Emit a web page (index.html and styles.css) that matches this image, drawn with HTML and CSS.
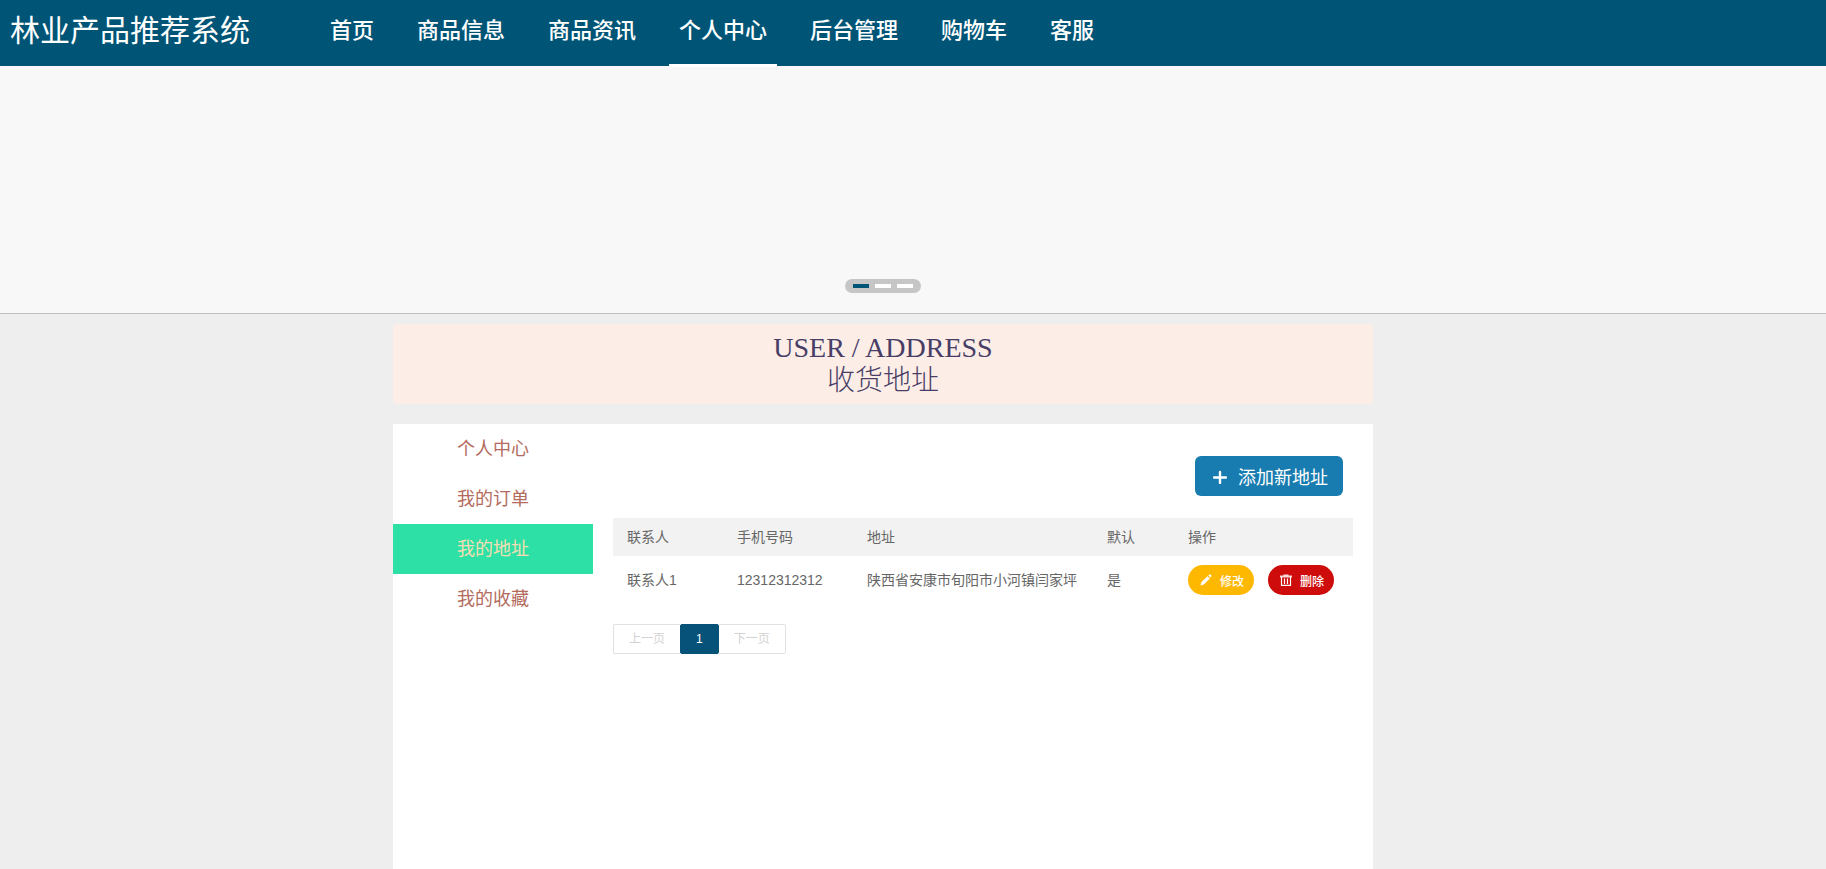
FILE: index.html
```html
<!DOCTYPE html>
<html lang="zh-CN">
<head>
<meta charset="utf-8">
<title>林业产品推荐系统</title>
<link rel="stylesheet" href="styles.css">
</head>
<body>
<header class="topbar">
  <a class="brand" href="#">林业产品推荐系统</a>
  <nav class="nav">
    <a class="nav-link" href="#">首页</a>
    <a class="nav-link" href="#">商品信息</a>
    <a class="nav-link" href="#">商品资讯</a>
    <a class="nav-link nav-link-active" href="#">个人中心</a>
    <a class="nav-link" href="#">后台管理</a>
    <a class="nav-link" href="#">购物车</a>
    <a class="nav-link" href="#">客服</a>
  </nav>
</header>
<section class="carousel">
  <div class="dots">
    <button class="dot dot-active" type="button" aria-label="1"></button>
    <button class="dot" type="button" aria-label="2"></button>
    <button class="dot" type="button" aria-label="3"></button>
  </div>
</section>
<main class="page">
  <h1 class="title"><span>USER / ADDRESS</span><span>收货地址</span></h1>
  <div class="panel">
    <nav class="side">
      <a class="side-link" href="#">个人中心</a>
      <a class="side-link" href="#">我的订单</a>
      <a class="side-link side-link-active" href="#">我的地址</a>
      <a class="side-link" href="#">我的收藏</a>
    </nav>
    <section class="content">
      <button class="add" type="button">
        <svg class="add-icon" viewBox="0 0 14 16" aria-hidden="true"><path d="M7 4v11M1 9.500h12" fill="none" stroke="currentColor" stroke-width="2.400" stroke-linecap="round"/></svg>
        添加新地址
      </button>
      <table class="table">
        <colgroup><col class="col-name"><col class="col-phone"><col class="col-address"><col class="col-default"><col class="col-actions"></colgroup>
        <thead><tr><th>联系人</th><th>手机号码</th><th>地址</th><th>默认</th><th>操作</th></tr></thead>
        <tbody>
          <tr>
            <td>联系人1</td><td>12312312312</td><td>陕西省安康市旬阳市小河镇闫家坪</td><td>是</td>
            <td>
              <div class="actions">
                <button class="pill pill-edit" type="button">
                  <svg class="pill-icon" viewBox="0 0 12 12" aria-hidden="true"><path d="M.5 11.500l1-3.500 6-5.800 2.300 2.300-6 5.900zM8.300 1.500l1-.9q.6-.4 1.200 0l.7.7q.4.600 0 1.200l-.8 1z" fill="currentColor"/></svg>
                  修改
                </button>
                <button class="pill pill-delete" type="button">
                  <svg class="pill-icon" viewBox="0 0 12 12" aria-hidden="true"><path d="M0 1.500h3.500V.5h5v1H12v2H0z" fill="currentColor" opacity=".85"/><path d="M1.500 3v8.300h9V3M4.500 4.500v5.500M7.500 4.500v5.500" fill="none" stroke="currentColor" stroke-width="1.200"/></svg>
                  删除
                </button>
              </div>
            </td>
          </tr>
        </tbody>
      </table>
      <div class="pager">
        <button class="page-btn page-prev" type="button" disabled>上一页</button>
        <button class="page-btn page-current" type="button">1</button>
        <button class="page-btn page-next" type="button" disabled>下一页</button>
      </div>
    </section>
  </div>
</main>
</body>
</html>
```
FILE: styles.css
```css
* { box-sizing: border-box; }
html, body { height: 100%; }
body {
  margin: 0;
  display: flex;
  flex-direction: column;
  background: #eee;
  color: #666;
  font: 14px/20px "Liberation Sans", "Noto Sans CJK SC", sans-serif;
}
a { text-decoration: none; color: inherit; }
button { font-family: inherit; border: 0; padding: 0; cursor: pointer; white-space: nowrap; }

.topbar {
  flex: none;
  display: flex;
  height: 66px;
  padding-left: 10px;
  background: #005577;
  color: #fff;
}
.brand { font-size: 30px; line-height: 62px; white-space: nowrap; }
.nav { display: flex; gap: 23px; margin-left: 70px; }
.nav-link {
  position: relative;
  padding: 0 10px;
  font-size: 22px;
  font-weight: 500;
  line-height: 62px;
  white-space: nowrap;
}
.nav-link-active::after {
  content: "";
  position: absolute;
  left: 0;
  right: 0;
  bottom: -1px;
  height: 3px;
  background: #fff;
}

.carousel {
  flex: none;
  display: flex;
  justify-content: center;
  align-items: flex-end;
  height: 248px;
  padding: 0 60px 20px 0;
  background: #f8f8f8;
  border-bottom: 1px solid #c0c0c0;
}
.dots { display: flex; gap: 6px; padding: 5px 8px; border-radius: 7px; background: #c6c6c6; }
.dot { width: 16px; height: 4px; background: #fff; }
.dot-active { background: #005577; }

.page {
  flex: 1;
  display: flex;
  flex-direction: column;
  align-items: center;
  padding: 10px 60px 0 0;
}
.title {
  display: flex;
  flex-direction: column;
  align-items: center;
  justify-content: center;
  width: 100%;
  max-width: 980px;
  height: 80px;
  margin: 0 0 20px;
  border-radius: 4px;
  background: #fceee6;
  color: #483d66;
  font: 300 28px/33px "Liberation Serif", "Noto Sans CJK SC", serif;
}
.panel { flex: 1; display: flex; width: 100%; max-width: 980px; background: #fff; }
.side { flex: none; width: 200px; }
.side-link { display: block; font-size: 18px; line-height: 50px; text-align: center; color: #b36b5e; }
.side-link-active { background: #2de0a5; color: #f5deb3; }

.content { flex: 1; display: flex; flex-direction: column; padding: 32px 20px 0; }
.add {
  display: flex;
  align-items: center;
  align-self: flex-end;
  gap: 11px;
  height: 40px;
  margin: 0 10px 22px 0;
  padding: 0 15px 0 18px;
  border-radius: 6px;
  background: #187cb0;
  color: #fff;
  font-size: 18px;
}
.add-icon { width: 14px; height: 16px; }

.table { width: 100%; table-layout: fixed; border-collapse: collapse; }
.table th, .table td { padding: 9px 14px; text-align: left; font-weight: 400; white-space: nowrap; }
.table th:last-child, .table td:last-child { padding-left: 15px; }
.table th { background: #f2f2f2; }
.col-name { width: 110px; }
.col-phone { width: 130px; }
.col-address { width: 240px; }
.col-default { width: 80px; }
.actions { display: flex; gap: 14px; }
.pill {
  display: flex;
  align-items: center;
  gap: 8px;
  height: 30px;
  padding: 0 10px 0 12px;
  border-radius: 15px;
  color: #fff;
  font-size: 12px;
  font-weight: 500;
}
.pill-edit { background: #ffb800; }
.pill-delete { background: #ce0c0c; }
.pill-icon { width: 12px; height: 12px; }

.pager { display: flex; margin-top: 20px; }
.page-btn { height: 30px; padding: 0 15px; border: 1px solid #e2e2e2; background: #fff; color: #d2d2d2; font-size: 12px; line-height: 26px; }
.page-prev { border-right: 0; border-radius: 2px 0 0 2px; }
.page-next { border-left: 0; border-radius: 0 2px 2px 0; }
.page-current { border-color: #065279; border-radius: 2px; background: #065279; color: #fff; }
```
